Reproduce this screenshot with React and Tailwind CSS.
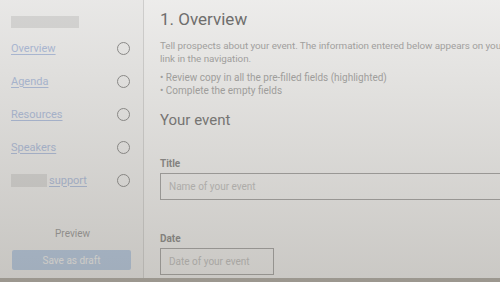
const navItems = [
  { label: 'Overview' },
  { label: 'Agenda' },
  { label: 'Resources' },
  { label: 'Speakers' },
  { label: 'support', masked: true },
]

function Sidebar() {
  return (
    <aside className="w-[144px] shrink-0 border-r border-[#dcdcdc] bg-[#fafafa] flex flex-col">
      <div className="ml-[11px] mt-[16px] h-[12px] w-[68px] bg-[#e2e2e2]" />
      <nav className="mt-[4px] flex flex-col">
        {navItems.map((item) => (
          <div key={item.label} className="flex items-center h-[33px] pl-[11px] pr-[13px]">
            <a className="flex items-center text-[11px] leading-[14px] text-[#b3c4e6] underline underline-offset-2 decoration-1">
              {item.masked && <span className="inline-block w-[36px] h-[13px] bg-[#e2e2e2] mr-[2px]" />}
              {item.label}
            </a>
            <span className="ml-auto w-[13px] h-[13px] rounded-full border-[1.5px] border-[#8e8e8e]" />
          </div>
        ))}
      </nav>
      <div className="mt-auto text-center text-[10px] text-[#9d9d9d] mb-[9px] pl-[2px]">Preview</div>
      <button className="mx-[12px] mb-[8px] h-[20px] rounded-[2px] bg-[#bcd3f0] text-white text-[10px]">
        Save as draft
      </button>
    </aside>
  )
}

function Field({ label, placeholder, width }) {
  return (
    <div>
      <div className="text-[10px] leading-[12px] font-bold text-[#8a8a8a] mb-[3px]">{label}</div>
      <div className={`${width} h-[27px] border border-[#a8a8a8] flex items-center px-[8px] text-[10px] text-[#c6c6c6]`}>
        {placeholder}
      </div>
    </div>
  )
}

export default function App() {
  return (
    <div
      className="relative w-[500px] h-[282px] overflow-hidden bg-white"
      style={{ fontFamily: 'Roboto, "Liberation Sans", sans-serif' }}
    >
      <div className="flex h-[278px]">
        <Sidebar />
        <main className="flex-1 min-w-0 pl-[16px] pt-[8px] whitespace-nowrap">
          <h1 className="text-[17px] leading-[22px] text-[#6e6e6e]">1. Overview</h1>
          <p className="mt-[10px] text-[9.85px] leading-[12.5px] tracking-[-0.05px] text-[#aaaaaa]">
            Tell prospects about your event. The information entered below appears on your event page and as a
            <br />
            link in the navigation.
          </p>
          <ul className="mt-[7px] text-[10px] leading-[12.5px] text-[#aaaaaa]">
            <li>• Review copy in all the pre-filled fields (highlighted)</li>
            <li>• Complete the empty fields</li>
          </ul>
          <h2 className="mt-[13px] text-[15px] leading-[20px] text-[#777777]">Your event</h2>
          <div className="mt-[28px] flex flex-col gap-[33px]">
            <Field label="Title" placeholder="Name of your event" width="w-[360px]" />
            <Field label="Date" placeholder="Date of your event" width="w-[114px]" />
          </div>
        </main>
      </div>
      <div className="h-[4px] bg-[#b4b0a9]" />
      <div className="absolute inset-0 bg-gradient-to-b from-[#736e64]/[0.13] to-[#736e64]/[0.38]" />
    </div>
  )
}
